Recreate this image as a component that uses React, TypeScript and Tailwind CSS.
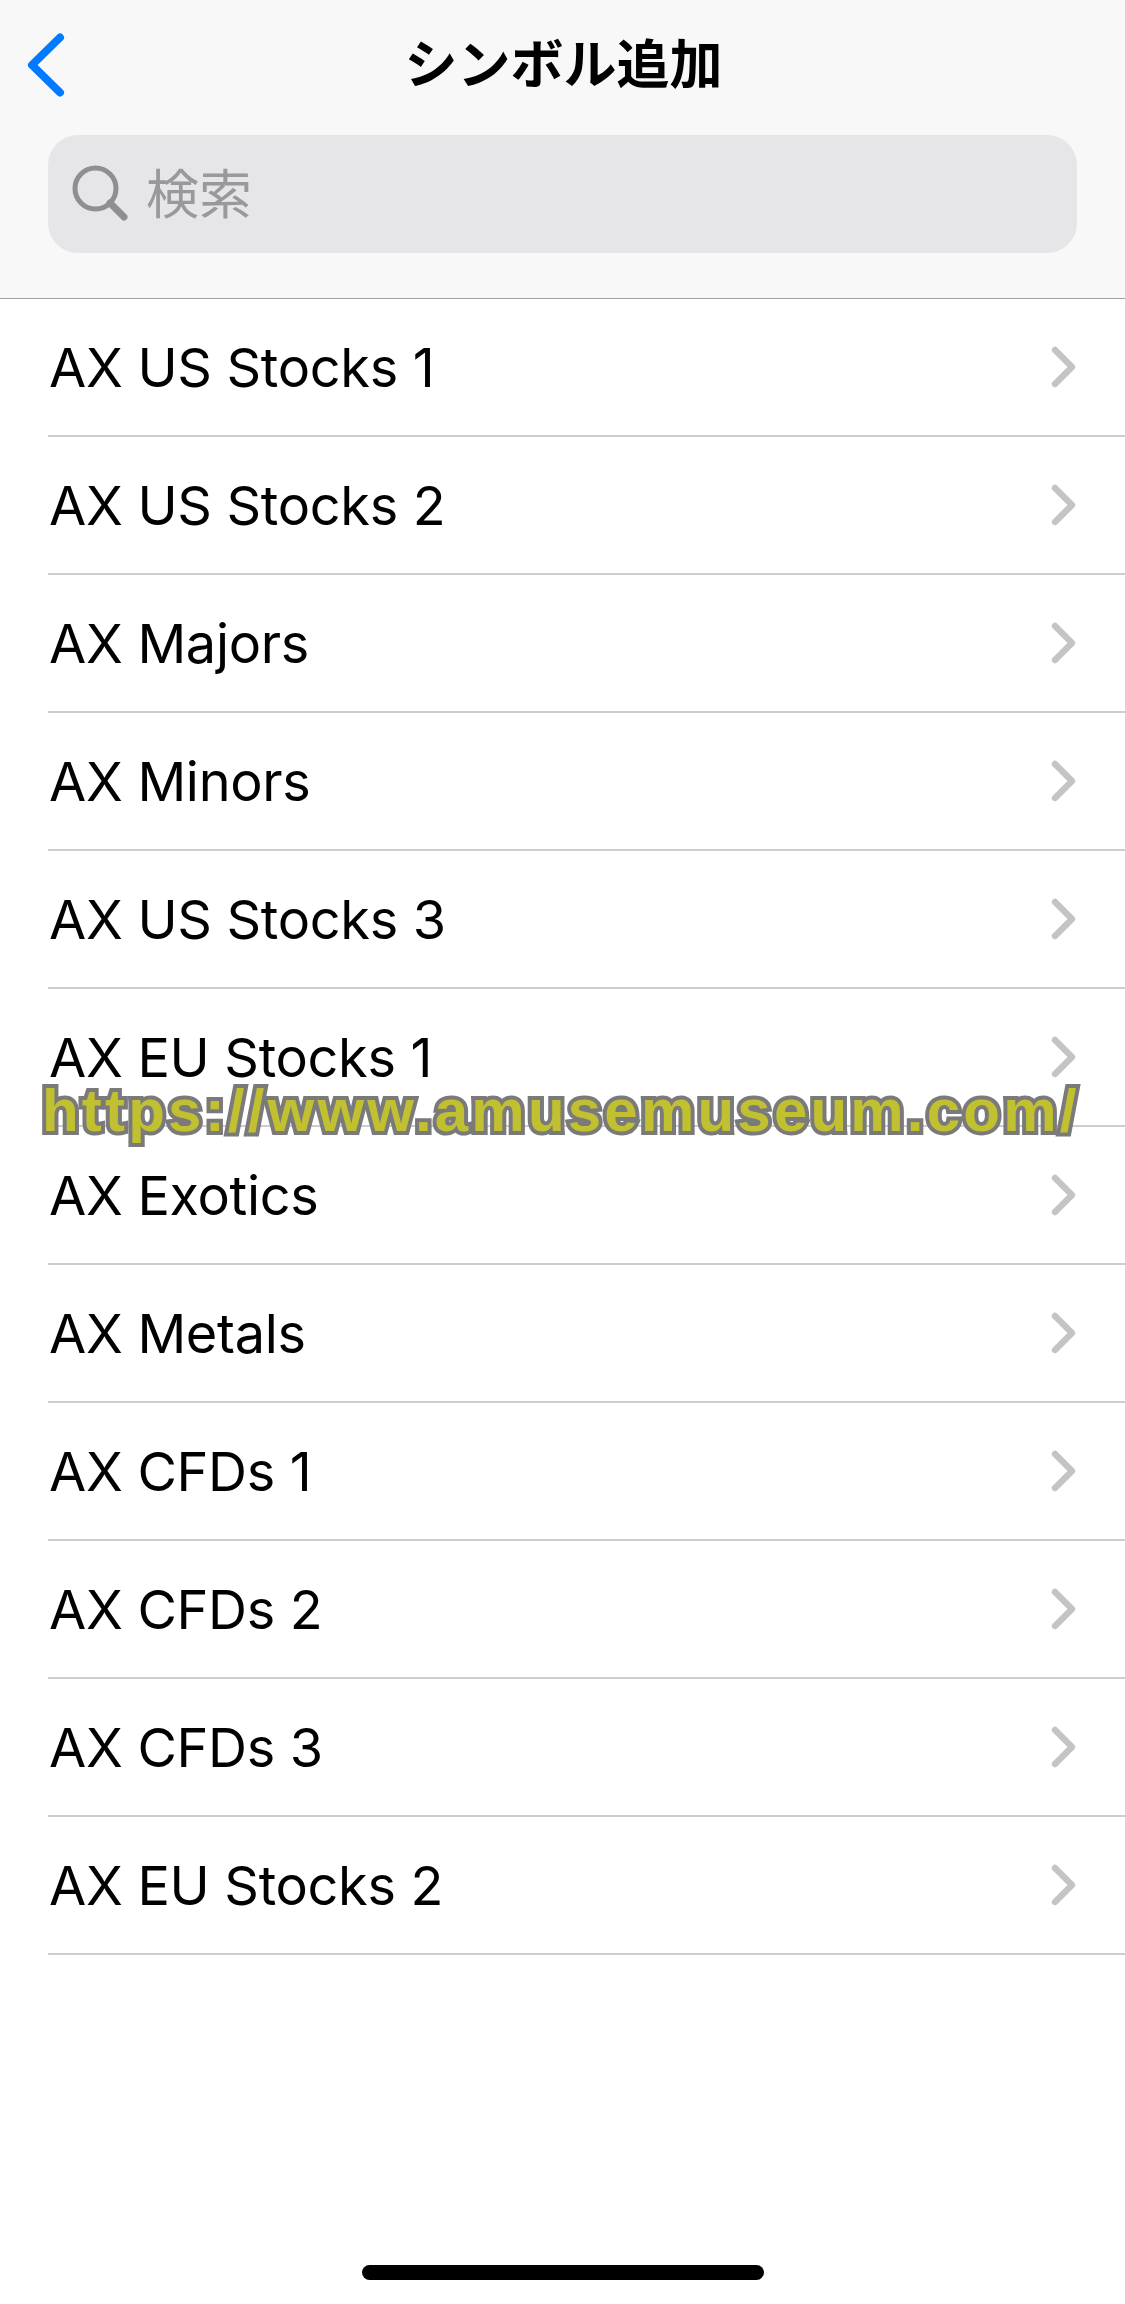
const rows = [
  "AX US Stocks 1",
  "AX US Stocks 2",
  "AX Majors",
  "AX Minors",
  "AX US Stocks 3",
  "AX EU Stocks 1",
  "AX Exotics",
  "AX Metals",
  "AX CFDs 1",
  "AX CFDs 2",
  "AX CFDs 3",
  "AX EU Stocks 2",
];

function BackIcon() {
  return (
    <svg width="40" height="66" viewBox="0 0 40 66" fill="none" className="ml-[27px]">
      <path d="M33 5.5 L5 33 L33 60.5" stroke="#007aff" strokeWidth="8" strokeLinecap="round" strokeLinejoin="round" />
    </svg>
  );
}

function SearchIcon() {
  return (
    <svg width="56" height="56" viewBox="0 0 56 56" fill="none" className="mb-[2px]">
      <circle cx="23.5" cy="23.5" r="20.5" stroke="#8e8e93" strokeWidth="5" />
      <path d="M38 38 L52 52" stroke="#8e8e93" strokeWidth="7" strokeLinecap="round" />
    </svg>
  );
}

function Chevron() {
  return (
    <svg width="26" height="42" viewBox="0 0 26 42" fill="none">
      <path d="M4 4 L21 21 L4 38" stroke="#c4c4c7" strokeWidth="6.5" strokeLinecap="round" strokeLinejoin="round" />
    </svg>
  );
}

export default function App() {
  return (
    <div className="relative h-[2304px] w-[1125px] overflow-hidden bg-white font-['Inter','Noto_Sans_CJK_JP',sans-serif] text-black">
      <div className="h-[299px] border-b border-[#a0a0a2] bg-[#f8f8f8]">
        <div className="relative flex h-[135px] items-center pb-[6px]">
          <BackIcon />
          <div className="absolute inset-x-0 top-[30px] pl-[2px] text-center text-[53px] leading-[70px] font-bold">
            シンボル追加
          </div>
        </div>
        <div className="mx-[48px] flex h-[118px] items-center gap-[18px] rounded-[30px] bg-[#e6e6e8] pl-[24px]">
          <SearchIcon />
          <span className="pt-[4px] text-[53px] text-[#99999d]">検索</span>
        </div>
      </div>

      <div>
        {rows.map((name) => (
          <div key={name} className="ml-[48px] flex h-[138px] items-center justify-between border-b-[2px] border-[#cdcdcf] pr-[48px]">
            <span className="ml-[1px] text-[54px] tracking-[-0.3px]">{name}</span>
            <Chevron />
          </div>
        ))}
      </div>

      <div className="absolute top-[1071px] left-[42px] font-['Liberation_Sans',sans-serif] text-[60px] leading-[80px] font-bold tracking-[3.2px] whitespace-nowrap text-[#c0c030] [-webkit-text-stroke:8px_#7a7a7a] [paint-order:stroke_fill] [stroke-linejoin:round]">
        https://www.amusemuseum.com/
      </div>

      <div className="absolute bottom-[24px] left-[362px] h-[15px] w-[402px] rounded-full bg-black" />
    </div>
  );
}
